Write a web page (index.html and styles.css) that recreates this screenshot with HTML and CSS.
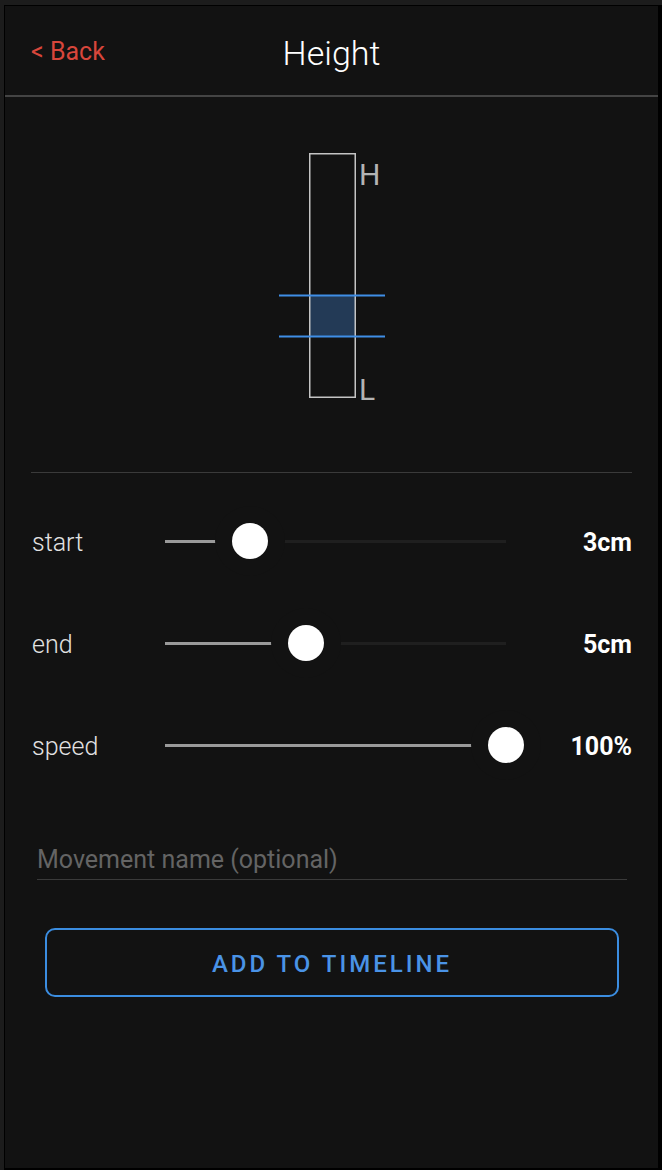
FILE: index.html
```html
<!DOCTYPE html>
<html>
<head>
<meta charset="utf-8">
<link rel="stylesheet" href="styles.css">
</head>
<body>
<div class="frame">
  <div class="screen">
    <header class="header">
      <span class="back">&lt; Back</span>
      <h1 class="title">Height</h1>
    </header>
    <div class="diagram">
      <svg width="653" height="375" viewBox="0 0 653 375">
        <rect x="305" y="198.5" width="45" height="41" fill="#233a56"/>
        <rect x="304.75" y="56.75" width="45.5" height="243.5" fill="none" stroke="#c4c4c4" stroke-width="1.5"/>
        <line x1="274" y1="198.5" x2="380" y2="198.5" stroke="#3f8ee6" stroke-width="2"/>
        <line x1="274" y1="239.5" x2="380" y2="239.5" stroke="#3f8ee6" stroke-width="2"/>
        <text x="354" y="88" class="hl">H</text>
        <text x="354" y="303" class="hl">L</text>
      </svg>
    </div>
    <div class="divider"></div>
    <div class="rows">
      <div class="row">
        <span class="label">start</span>
        <div class="slider">
          <div class="track"><div class="fill" style="width:85px"></div></div>
          <div class="thumb" style="left:85px"></div>
        </div>
        <span class="value">3cm</span>
      </div>
      <div class="row">
        <span class="label">end</span>
        <div class="slider">
          <div class="track"><div class="fill" style="width:141px"></div></div>
          <div class="thumb" style="left:141px"></div>
        </div>
        <span class="value">5cm</span>
      </div>
      <div class="row">
        <span class="label">speed</span>
        <div class="slider">
          <div class="track"><div class="fill" style="width:341px"></div></div>
          <div class="thumb" style="left:341px"></div>
        </div>
        <span class="value">100%</span>
      </div>
    </div>
    <input class="name" type="text" placeholder="Movement name (optional)">
    <button class="add">ADD TO TIMELINE</button>
  </div>
</div>
</body>
</html>
```
FILE: styles.css
```css
html, body {
  margin: 0;
  padding: 0;
  background: #000;
}
.frame {
  width: 662px;
  height: 1170px;
  box-sizing: border-box;
  border-left: 4px solid #1c1c1c;
  border-top: 5px solid #1c1c1c;
}
.screen {
  width: 654px;
  height: 1163px;
  box-sizing: border-box;
  border-left: 1px solid #000;
  border-top: 1px solid #000;
  background: #121212;
  font-family: Roboto, "Liberation Sans", sans-serif;
  display: flex;
  flex-direction: column;
}
.header {
  position: relative;
  height: 89px;
  border-bottom: 2px solid #444;
  display: flex;
  align-items: center;
  justify-content: center;
}
.back {
  position: absolute;
  left: 26px;
  top: 31px;
  color: #d8463b;
  font-size: 25px;
  line-height: 30px;
}
.title {
  margin: 0;
  color: #fff;
  font-weight: 300;
  font-size: 34px;
  line-height: 40px;
  padding-top: 4px;
}
.diagram {
  height: 375px;
}
.diagram svg {
  display: block;
}
.hl {
  font-family: Roboto, "Liberation Sans", sans-serif;
  font-size: 30px;
  fill: #b4b4b4;
}
.divider {
  height: 1px;
  background: #3a3a3a;
  margin: 0 26px;
}
.rows {
  margin-top: 17px;
  display: flex;
  flex-direction: column;
}
.row {
  height: 102px;
  display: flex;
  align-items: center;
  padding: 0 26px 0 27px;
}
.label {
  width: 133px;
  color: #e2e2e2;
  font-size: 25px;
  font-weight: 300;
  padding-top: 2px;
}
.slider {
  position: relative;
  width: 341px;
  height: 36px;
  display: flex;
  align-items: center;
}
.track {
  width: 100%;
  height: 3px;
  background: #1f1f1f;
}
.fill {
  height: 3px;
  background: #9a9a9a;
}
.thumb {
  position: absolute;
  top: 50%;
  width: 36px;
  height: 36px;
  border-radius: 50%;
  background: #fff;
  transform: translate(-50%, -50%);
  box-shadow: 0 0 0 17px #121212;
}
.value {
  flex: 1;
  text-align: right;
  color: #fff;
  font-size: 25px;
  font-weight: 700;
  padding-top: 2px;
}
.name {
  margin: 48px 31px 0 32px;
  padding: 0 0 5px 0;
  height: 36px;
  box-sizing: border-box;
  border: none;
  border-bottom: 1px solid #3a3a3a;
  background: transparent;
  font-family: Roboto, "Liberation Sans", sans-serif;
  font-size: 25px;
  line-height: 30px;
  color: #ddd;
  outline: none;
}
.name::placeholder {
  color: #646464;
}
.add {
  margin: 48px 39px 0 40px;
  padding-top: 3px;
  height: 69px;
  box-sizing: border-box;
  border: 2px solid #3b8de0;
  border-radius: 10px;
  background: transparent;
  color: #4a93e6;
  font-family: Roboto, "Liberation Sans", sans-serif;
  font-size: 24px;
  font-weight: 500;
  letter-spacing: 3px;
}
```
